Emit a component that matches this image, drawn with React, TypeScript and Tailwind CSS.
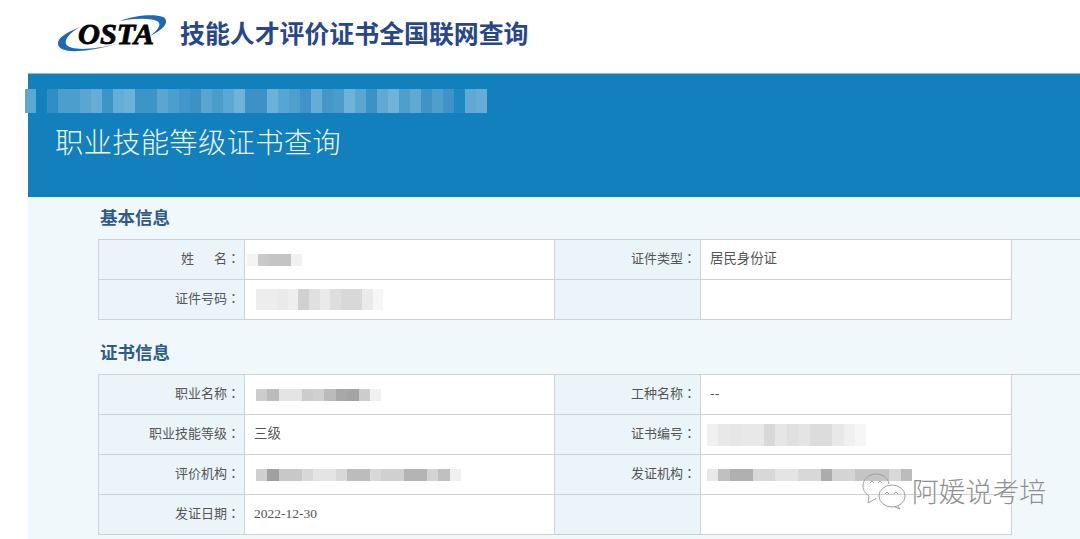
import React from "react";

const CJK = "font-['Noto_Sans_CJK_SC','Liberation_Sans',sans-serif]";

// pixelated blur that hides personal data in the picture
const Mosaic = ({
  shades,
  cell = 11.4,
  height = 12,
  className = "",
}: {
  shades: string[];
  cell?: number;
  height?: number;
  className?: string;
}) => (
  <div className={`flex ${className}`} style={{ height }}>
    {shades.map((c, i) => (
      <div key={i} style={{ width: cell, backgroundColor: c }} />
    ))}
  </div>
);

const Label = ({ children }: { children?: React.ReactNode }) => (
  <div className="flex h-10 items-center justify-end border-r border-b border-[#cdd1d2] bg-[#ebf5f9] pr-[4px] pb-[3px] text-[13px] text-[#555]">
    {children}
    {/* the TC face centres the full-width colon, as the reference does */}
    {children && <span className="font-['Noto_Sans_CJK_TC',sans-serif]">：</span>}
  </div>
);

const Value = ({ children }: { children?: React.ReactNode }) => (
  <div className="flex h-10 items-center border-r border-b border-[#cdd1d2] bg-white pl-[9px] text-[13.4px] text-[#555]">
    {children}
  </div>
);

const Text = ({ children }: { children: React.ReactNode }) => <span className="pb-[5px]">{children}</span>;

const Section = ({ title, children }: { title: string; children: React.ReactNode }) => (
  <section>
    <h2 className="pl-[2px] text-[17.5px] leading-[24px] font-bold text-[#2f5a8c]">{title}</h2>
    <div className="mt-[10px] grid grid-cols-[146px_310px_146px_311px] border-t border-l border-[#cdd1d2]">
      {children}
    </div>
  </section>
);

const Logo = () => (
  <svg width="114" height="44" viewBox="0 0 114 44" className="shrink-0">
    <path d="M25 16 C12 21 2 27 3 33 C4 42 24 43 62 33 C37 39 15 40 11 33 C9 28 16 21 25 16 Z" fill="#1c6ab5" />
    <path d="M65 10 C80 4 100 3 108 6 C114 9 112 17 95 25 C104 18 107 13 102 10 C95 7 80 7 65 10 Z" fill="#1c6ab5" />
    <text
      x="23"
      y="33"
      fontFamily="'Liberation Serif', serif"
      fontSize="30"
      fontWeight="700"
      fontStyle="italic"
      textLength="76"
      lengthAdjust="spacingAndGlyphs"
      fill="#000"
      stroke="#000"
      strokeWidth="0.8"
    >
      OSTA
    </text>
  </svg>
);

const WeChat = () => (
  <svg width="44" height="37" viewBox="0 0 44 37" fill="none" stroke="#a0a0a0" strokeWidth="1" className="shrink-0">
    <path d="M7 23 C3 20 1 17 1 13 C1 6 7 1 14 1 C21 1 26 5 27 11" />
    <path d="M7 23 L6 30 L14 25.5" />
    <ellipse cx="30" cy="23" rx="13" ry="11" />
    <path d="M36 33 L38 36 L33 34" />
    <path d="M8 10 L10 8 L12 10 M16 10 L18 8 L20 10 M23 21 L25 19 L27 21 M32 21 L34 19 L36 21" />
  </svg>
);

const bannerShades = [
  "#5ba8d3", "#1180bd", "#2f8fc4", "#4c9ecc", "#4c9ecc", "#5aa6d1", "#66add6", "#3d95c7", "#66add6", "#6cb1d8",
  "#3d95c7", "#3d95c7", "#5aa6d1", "#4c9ecc", "#4296c8", "#3d92c5", "#58a5d1", "#4a9ccb", "#5ca8d2", "#70b3d9",
  "#3d92c5", "#3d92c5", "#6cb1d8", "#58a5d1", "#4f9fcd", "#3f93c6", "#66add6", "#4696c8", "#4a9ccb", "#70b3d9",
  "#5aa6d1", "#3d92c5", "#60a9d3", "#70b3d9", "#4f9fcd", "#60a9d3", "#3f93c6", "#4f9fcd", "#3f93c6", "#1f88c0",
  "#60a9d3", "#66add6",
];

export default function App() {
  return (
    <div className={`relative h-[539px] w-[1080px] overflow-hidden bg-white ${CJK}`}>
      {/* Logo and site title */}
      <header className="flex h-[73px] items-center pb-[7px] pl-[55px]">
        <Logo />
        <h1 className="ml-[11px] text-[24.9px] font-bold text-[#27478a]">技能人才评价证书全国联网查询</h1>
      </header>

      <main className="ml-[28px] h-[466px] bg-[#f0f8fc]">
        {/* Blue banner */}
        <div className="h-[124px] border-t border-[#7cc4e8] bg-[#1180bd] pt-[46px] pl-[27px]">
          <h2 className="text-[28.4px] leading-[42px] font-light tracking-[0.2px] text-white/95">职业技能等级证书查询</h2>
        </div>

        <div className="flex flex-col gap-[20px] pt-[8px] pl-[70px]">
          <Section title="基本信息">
            <Label>
              姓<span className="ml-[20px]">名</span>
            </Label>
            <Value>
              <Mosaic className="ml-[-7px]" cell={11} shades={["#f4f4f4", "#c9c9c9", "#c4c4c4", "#c4c4c4", "#f1f1f1"]} />
            </Value>
            <Label>证件类型</Label>
            <Value><Text>居民身份证</Text></Value>
            <Label>证件号码</Label>
            <Value>
              <Mosaic
                height={21}
                cell={10.6}
                className="ml-[2px]"
                shades={["#ededed", "#ededed", "#eaeaea", "#eeeeee", "#d0d0d0", "#e0e0e0", "#eaeaea", "#dedede", "#d8d8d8", "#d8d8d8", "#eaeaea", "#f6f6f6"]}
              />
            </Value>
            <Label />
            <Value />
          </Section>

          <Section title="证书信息">
            <Label>职业名称</Label>
            <Value>
              <Mosaic
                className="ml-[2px]"
                shades={["#cccccc", "#bbbbbb", "#e4e4e4", "#e4e4e4", "#cccccc", "#d0d0d0", "#bbbbbb", "#a8a8a8", "#a4a4a4", "#cccccc", "#f0f0f0"]}
              />
            </Value>
            <Label>工种名称</Label>
            <Value><Text>--</Text></Value>
            <Label>职业技能等级</Label>
            <Value><Text>三级</Text></Value>
            <Label>证书编号</Label>
            <Value>
              <Mosaic
                height={22}
                className="ml-[-3px]"
                shades={["#f0f0f0", "#e8e8e8", "#e6e6e6", "#e8e8e8", "#e8e8e8", "#d8d8d8", "#e6e6e6", "#e0e0e0", "#e4e4e4", "#dcdcdc", "#dcdcdc", "#e8e8e8", "#f0f0f0", "#f6f6f6"]}
              />
            </Value>
            <Label>评价机构</Label>
            <Value>
              <Mosaic
                className="ml-[2px]"
                shades={["#cfcfcf", "#a0a0a0", "#c8c8c8", "#c8c8c8", "#d8d8d8", "#e4e4e4", "#e4e4e4", "#d8d8d8", "#bcbcbc", "#bcbcbc", "#d8d8d8", "#d0d0d0", "#d0d0d0", "#b4b4b4", "#b4b4b4", "#d4d4d4", "#c0c0c0", "#f0f0f0"]}
              />
            </Value>
            <Label>发证机构</Label>
            <Value>
              <Mosaic
                className="ml-[-3px]"
                shades={["#e8e8e8", "#c0c0c0", "#b0b0b0", "#b0b0b0", "#d8d8d8", "#d8d8d8", "#e4e4e4", "#e4e4e4", "#d8d8d8", "#d8d8d8", "#acacac", "#d4d4d4", "#d4d4d4", "#c4c4c4", "#c4c4c4", "#c4c4c4", "#d8d8d8", "#bcbcbc"]}
              />
            </Value>
            <Label>发证日期</Label>
            <Value>
              <span className="font-['Liberation_Serif',serif] text-[13.5px]">2022-12-30</span>
            </Value>
            <Label />
            <Value />
          </Section>
        </div>
      </main>

      {/* Mosaic over the banner, overhangs its left edge */}
      <Mosaic className="absolute top-[89px] left-[25px]" cell={11} height={24} shades={bannerShades} />

      {/* WeChat account watermark */}
      <div className="absolute top-[472px] left-[862px] flex items-center gap-[6px]">
        <WeChat />
        <span className="text-[26.8px] leading-[38px] font-light text-[#8f8f8f] [text-shadow:0_0_2px_white]">阿媛说考培</span>
      </div>
    </div>
  );
}
